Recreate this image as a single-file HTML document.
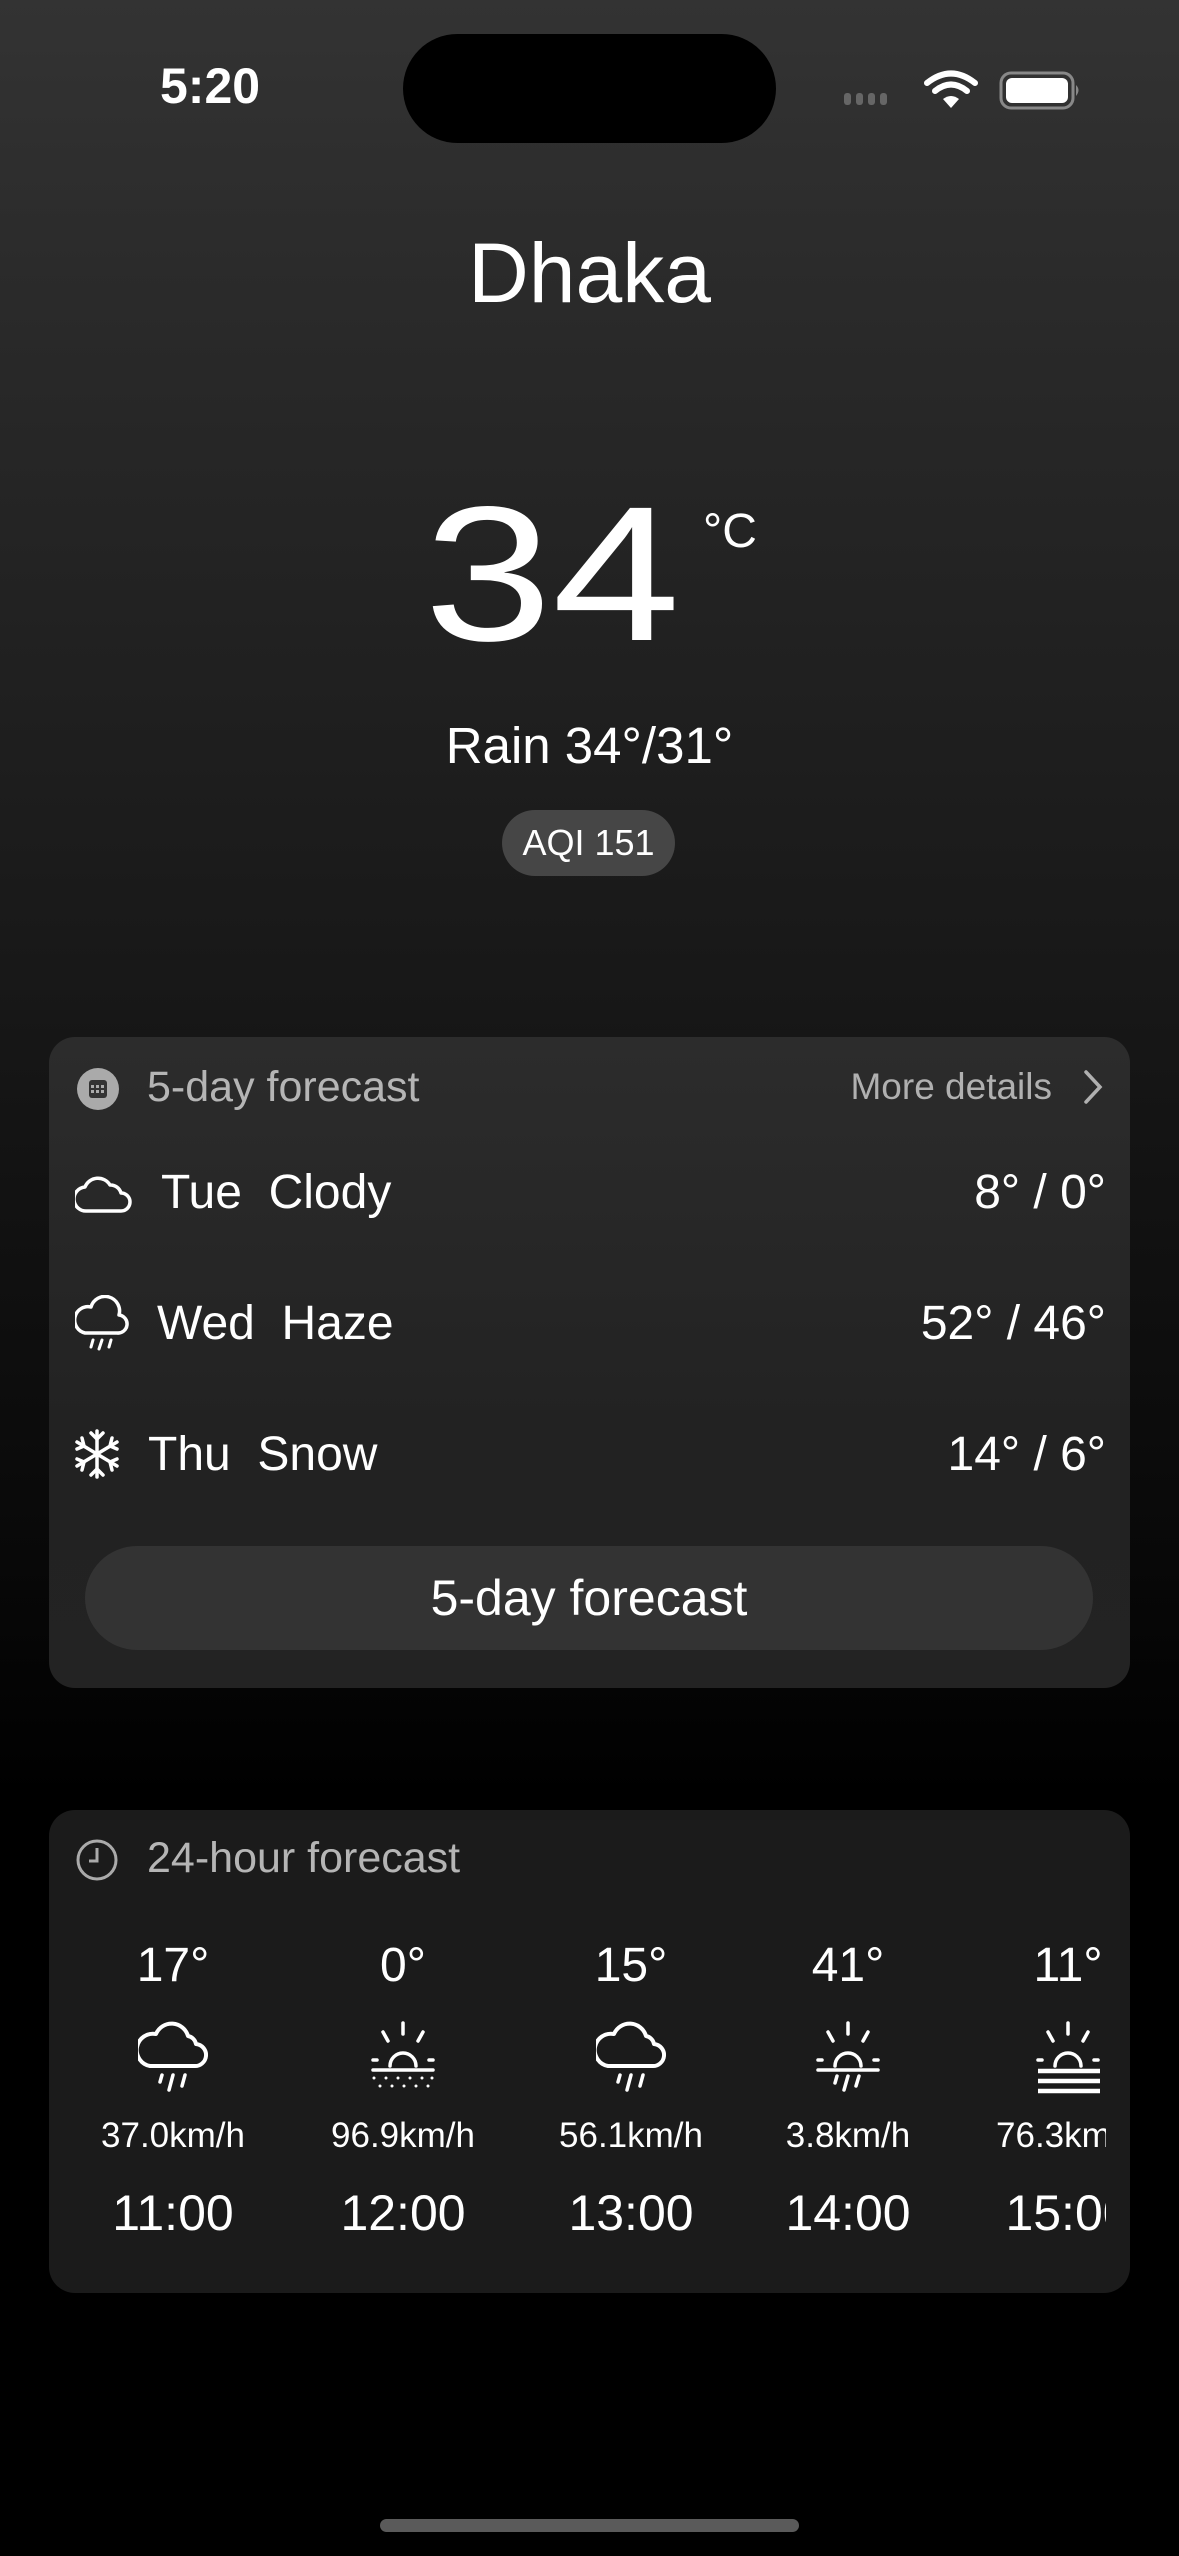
<!DOCTYPE html>
<html><head><meta charset="utf-8"><style>
*{margin:0;padding:0;box-sizing:border-box}
body{width:1179px;height:2556px;overflow:hidden;background:linear-gradient(180deg,#333 0px,#2a2a2a 300px,#1a1a1a 900px,#0a0a0a 1500px,#000 1800px,#000 100%);font-family:"Liberation Sans",sans-serif;color:#fff;position:relative}
.a{position:absolute;white-space:nowrap}
.c{text-align:center}
.card{position:absolute;left:49px;width:1081px;border-radius:26px}
</style></head><body>
<div class="a" style="left:160px;top:60px;font-size:50px;font-weight:bold;line-height:52px">5:20</div>
<div class="a" style="left:403px;top:34px;width:373px;height:109px;border-radius:55px;background:#000"></div>
<svg class="a" style="left:844px;top:70px" width="240" height="40" viewBox="0 0 240 40">
<g fill="#666"><rect x="0" y="23" width="7" height="12" rx="3"/><rect x="12" y="23" width="7" height="12" rx="3"/><rect x="24" y="23" width="7" height="12" rx="3"/><rect x="36" y="23" width="7" height="12" rx="3"/></g>
<g fill="none" stroke="#fff" stroke-width="6" stroke-linecap="round"><path d="M83 13 Q107 -6 131 13"/><path d="M91 21 Q107 8 123 21"/></g>
<path d="M99 29 Q107 23 115 29 L107 38Z" fill="#fff"/>
<rect x="157" y="3" width="72" height="35" rx="10" fill="none" stroke="#888" stroke-width="3"/>
<rect x="162" y="8" width="62" height="25" rx="6" fill="#fff"/>
<path d="M232 15 Q237 20 232 26Z" fill="#888"/>
</svg>
<div class="a c" style="left:0;width:1179px;top:231px;font-size:84px;line-height:84px">Dhaka</div>
<div class="a" style="left:424px;top:478px;font-size:192px;line-height:192px;transform:scaleX(1.2);transform-origin:0 0">34</div>
<div class="a" style="left:703px;top:508px;font-size:48px;line-height:48px">°C</div>
<div class="a c" style="left:0;width:1179px;top:716px;font-size:51px;line-height:60px">Rain 34°/31°</div>
<div class="a c" style="left:502px;top:810px;width:173px;height:66px;border-radius:33px;background:#464646;font-size:36px;line-height:66px">AQI 151</div>

<div class="card" style="top:1037px;height:651px;background:linear-gradient(180deg,#2c2c2c,#222 60%,#232323)">
<svg class="a" style="left:27px;top:30px" width="44" height="44" viewBox="0 0 44 44"><circle cx="22" cy="22" r="21" fill="#aaa"/><rect x="13" y="13" width="18" height="18" rx="3" fill="#333"/><g fill="#aaa"><rect x="15" y="18" width="3" height="3"/><rect x="20" y="18" width="3" height="3"/><rect x="25" y="18" width="3" height="3"/><rect x="15" y="23" width="3" height="3"/><rect x="20" y="23" width="3" height="3"/><rect x="25" y="23" width="3" height="3"/></g></svg>
<div class="a" style="left:98px;top:26px;font-size:43px;line-height:48px;color:#b5b5b5">5-day forecast</div>
<div class="a" style="right:78px;top:26px;font-size:37px;line-height:48px;color:#b0b0b0">More details</div>
<svg class="a" style="left:1033px;top:32px" width="22" height="36" viewBox="0 0 22 36"><path d="M4 3 L18 18 L4 33" fill="none" stroke="#b0b0b0" stroke-width="3.5" stroke-linecap="round"/></svg>

<svg class="a" style="left:26px;top:134px" width="58" height="44" viewBox="0 0 58 44"><path d="M12 40 H46 A9 9 0 0 0 46 22 A11 11 0 0 0 35 14 A14 14 0 0 0 10 16 A12 12 0 0 0 12 40Z" fill="none" stroke="#fff" stroke-width="3.5" stroke-linejoin="round"/></svg>
<div class="a" style="left:112px;top:128px;font-size:48px;line-height:56px">Tue&nbsp; Clody</div>
<div class="a" style="right:24px;top:128px;font-size:48px;line-height:56px">8° / 0°</div>

<svg class="a" style="left:26px;top:258px" width="54" height="58" viewBox="0 0 54 58"><path d="M10 38 H42 A9 9 0 0 0 44 20 A14 14 0 0 0 16 12 A13 13 0 0 0 10 38Z" fill="none" stroke="#fff" stroke-width="3.5" stroke-linejoin="round"/><g stroke="#fff" stroke-width="3" stroke-linecap="round"><path d="M18 45 L16 52"/><path d="M27 45 L24 54"/><path d="M36 45 L34 52"/></g></svg>
<div class="a" style="left:108px;top:259px;font-size:48px;line-height:56px">Wed&nbsp; Haze</div>
<div class="a" style="right:24px;top:259px;font-size:48px;line-height:56px">52° / 46°</div>

<svg class="a" style="left:25px;top:392px" width="46" height="50" viewBox="0 0 46 50"><g stroke="#fff" stroke-width="3.5" stroke-linecap="round" fill="none"><path d="M23 2 V48"/><path d="M3 13 L43 37"/><path d="M3 37 L43 13"/><path d="M17 4 L23 10 L29 4"/><path d="M17 46 L23 40 L29 46"/><path d="M3 20 L10 17 L8 9"/><path d="M43 30 L36 33 L38 41"/><path d="M3 30 L10 33 L8 41"/><path d="M43 20 L36 17 L38 9"/></g></svg>
<div class="a" style="left:99px;top:390px;font-size:48px;line-height:56px">Thu&nbsp; Snow</div>
<div class="a" style="right:24px;top:390px;font-size:48px;line-height:56px">14° / 6°</div>

<div class="a c" style="left:36px;top:509px;width:1008px;height:104px;border-radius:52px;background:#333;font-size:50px;line-height:104px">5-day forecast</div>
</div>

<div class="card" style="top:1810px;height:483px;background:#1b1b1b;overflow:hidden">
<svg class="a" style="left:26px;top:28px" width="44" height="44" viewBox="0 0 44 44"><circle cx="22" cy="22" r="19" fill="none" stroke="#aaa" stroke-width="3"/><path d="M22 10 V23 H14" fill="none" stroke="#aaa" stroke-width="3"/></svg>
<div class="a" style="left:98px;top:24px;font-size:43px;line-height:48px;color:#b5b5b5">24-hour forecast</div>
<div class="a" style="left:0;top:0;width:1057px;height:483px;overflow:hidden">
<div class="a c" style="left:54px;width:140px;top:128px;font-size:48px;line-height:56px">17°</div>
<div class="a c" style="left:284px;width:140px;top:128px;font-size:48px;line-height:56px">0°</div>
<div class="a c" style="left:512px;width:140px;top:128px;font-size:48px;line-height:56px">15°</div>
<div class="a c" style="left:729px;width:140px;top:128px;font-size:48px;line-height:56px">41°</div>
<div class="a c" style="left:949px;width:140px;top:128px;font-size:48px;line-height:56px">11°</div>

<svg class="a" style="left:89px;top:210px" width="70" height="74" viewBox="0 0 70 74"><path d="M12 46 H56 A10 10 0 0 0 58 24 A10 10 0 0 0 50 16 A17 17 0 0 0 18 14 A16 16 0 0 0 12 46Z" fill="none" stroke="#fff" stroke-width="4" stroke-linejoin="round"/><g stroke="#fff" stroke-width="3.5" stroke-linecap="round"><path d="M24 55 L22 62"/><path d="M35 55 L31 70"/><path d="M47 55 L44 66"/></g></svg>
<svg class="a" style="left:319px;top:210px" width="70" height="74" viewBox="0 0 70 74"><g stroke="#fff" stroke-width="3.5" stroke-linecap="round" fill="none"><path d="M35 3 V14"/><path d="M15 12 L20 21"/><path d="M55 12 L50 21"/><path d="M5 40 H9"/><path d="M61 40 H65"/><path d="M22 46 A13 13 0 0 1 48 46"/><path d="M5 50 H65"/></g><g fill="#fff"><circle cx="6" cy="58" r="1.5"/><circle cx="18" cy="58" r="1.5"/><circle cx="30" cy="58" r="1.5"/><circle cx="42" cy="58" r="1.5"/><circle cx="54" cy="58" r="1.5"/><circle cx="64" cy="58" r="1.5"/><circle cx="12" cy="66" r="1.5"/><circle cx="24" cy="66" r="1.5"/><circle cx="36" cy="66" r="1.5"/><circle cx="48" cy="66" r="1.5"/><circle cx="60" cy="66" r="1.5"/></g></svg>
<svg class="a" style="left:547px;top:210px" width="70" height="74" viewBox="0 0 70 74"><path d="M12 46 H56 A10 10 0 0 0 58 24 A10 10 0 0 0 50 16 A17 17 0 0 0 18 14 A16 16 0 0 0 12 46Z" fill="none" stroke="#fff" stroke-width="4" stroke-linejoin="round"/><g stroke="#fff" stroke-width="3.5" stroke-linecap="round"><path d="M24 55 L22 62"/><path d="M35 55 L31 70"/><path d="M47 55 L44 66"/></g></svg>
<svg class="a" style="left:764px;top:210px" width="70" height="74" viewBox="0 0 70 74"><g stroke="#fff" stroke-width="3.5" stroke-linecap="round" fill="none"><path d="M35 3 V14"/><path d="M15 12 L20 21"/><path d="M55 12 L50 21"/><path d="M5 40 H9"/><path d="M61 40 H65"/><path d="M22 46 A13 13 0 0 1 48 46"/><path d="M5 50 H65"/><path d="M24 56 L22 63"/><path d="M35 56 L31 70"/><path d="M46 56 L43 66"/></g></svg>
<svg class="a" style="left:984px;top:210px" width="70" height="74" viewBox="0 0 70 74"><g stroke="#fff" stroke-width="3.5" stroke-linecap="round" fill="none"><path d="M35 3 V14"/><path d="M15 12 L20 21"/><path d="M55 12 L50 21"/><path d="M5 40 H9"/><path d="M61 40 H65"/><path d="M22 46 A13 13 0 0 1 48 46"/></g><g stroke="#fff" stroke-width="4.5"><path d="M5 51 H67"/><path d="M5 61 H67"/><path d="M5 71 H67"/></g></svg>

<div class="a c" style="left:24px;width:200px;top:306px;font-size:35px;line-height:40px">37.0km/h</div>
<div class="a c" style="left:254px;width:200px;top:306px;font-size:35px;line-height:40px">96.9km/h</div>
<div class="a c" style="left:482px;width:200px;top:306px;font-size:35px;line-height:40px">56.1km/h</div>
<div class="a c" style="left:699px;width:200px;top:306px;font-size:35px;line-height:40px">3.8km/h</div>
<div class="a c" style="left:919px;width:200px;top:306px;font-size:35px;line-height:40px">76.3km/h</div>

<div class="a c" style="left:44px;width:160px;top:374px;font-size:50px;line-height:58px">11:00</div>
<div class="a c" style="left:274px;width:160px;top:374px;font-size:50px;line-height:58px">12:00</div>
<div class="a c" style="left:502px;width:160px;top:374px;font-size:50px;line-height:58px">13:00</div>
<div class="a c" style="left:719px;width:160px;top:374px;font-size:50px;line-height:58px">14:00</div>
<div class="a c" style="left:939px;width:160px;top:374px;font-size:50px;line-height:58px">15:00</div>
</div>
</div>

<div class="a" style="left:380px;top:2519px;width:419px;height:13px;border-radius:7px;background:#5a5a5a"></div>
</body></html>
